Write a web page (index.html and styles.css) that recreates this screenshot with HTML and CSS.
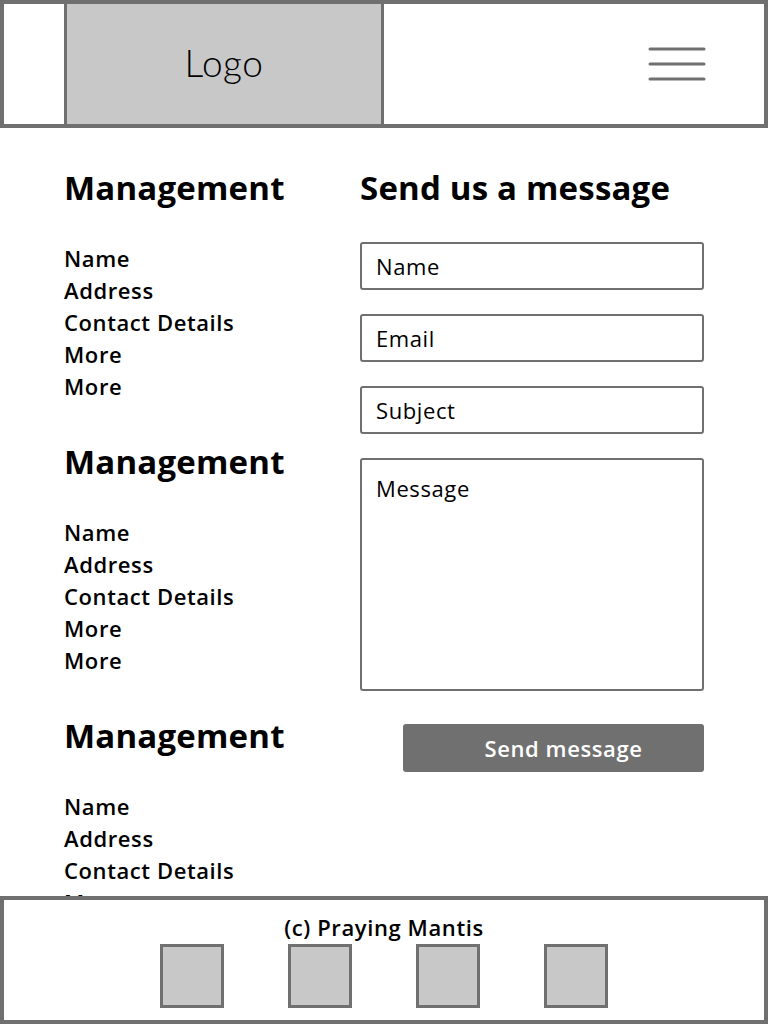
FILE: index.html
```html
<!DOCTYPE html>
<html lang="en">
<head>
<meta charset="utf-8">
<title>Contact</title>
<link rel="stylesheet" href="styles.css">
</head>
<body>
<header class="site-header">
  <div class="header-spacer"></div>
  <div class="logo">Logo</div>
  <div class="header-right">
    <button class="menu-btn" aria-label="Menu">
      <svg width="58" height="36" viewBox="0 0 58 36">
        <g stroke="#707070" stroke-width="3" stroke-linecap="round">
          <line x1="2" y1="3" x2="56" y2="3"/>
          <line x1="2" y1="18" x2="56" y2="18"/>
          <line x1="2" y1="33" x2="56" y2="33"/>
        </g>
      </svg>
    </button>
  </div>
</header>

<main class="content">
  <section class="contacts">
    <div class="group">
      <h2 class="title">Management</h2>
      <ul class="details">
        <li>Name</li>
        <li>Address</li>
        <li>Contact Details</li>
        <li>More</li>
        <li>More</li>
      </ul>
    </div>
    <div class="group">
      <h2 class="title">Management</h2>
      <ul class="details">
        <li>Name</li>
        <li>Address</li>
        <li>Contact Details</li>
        <li>More</li>
        <li>More</li>
      </ul>
    </div>
    <div class="group">
      <h2 class="title">Management</h2>
      <ul class="details">
        <li>Name</li>
        <li>Address</li>
        <li>Contact Details</li>
        <li>More</li>
        <li>More</li>
      </ul>
    </div>
  </section>

  <section class="message">
    <h2 class="title">Send us a message</h2>
    <form class="form">
      <input class="field" type="text" placeholder="Name">
      <input class="field" type="email" placeholder="Email">
      <input class="field" type="text" placeholder="Subject">
      <textarea class="field area" placeholder="Message"></textarea>
      <button class="send" type="button">Send message</button>
    </form>
  </section>
</main>

<footer class="site-footer">
  <p class="copy">(c) Praying Mantis</p>
  <div class="socials">
    <span class="social"></span>
    <span class="social"></span>
    <span class="social"></span>
    <span class="social"></span>
  </div>
</footer>
</body>
</html>
```

FILE: styles.css
```css
* { box-sizing: border-box; }

html, body {
  margin: 0;
  padding: 0;
  background: #fff;
  color: #000;
  font-family: "Open Sans", "Noto Sans", sans-serif;
}

.site-header {
  height: 128px;
  border: 4px solid #707070;
  display: flex;
}

.header-spacer { width: 60px; }

.logo {
  width: 320px;
  background: #c8c8c8;
  border-left: 3px solid #707070;
  border-right: 3px solid #707070;
  display: flex;
  align-items: center;
  justify-content: center;
  padding-bottom: 4px;
  font-family: "Lato", sans-serif;
  font-size: 37px;
  font-weight: 300;
  letter-spacing: 0.5px;
}

.header-right {
  flex: 1;
  display: flex;
  align-items: center;
  justify-content: flex-end;
  padding-right: 58px;
}

.menu-btn {
  border: 0;
  background: none;
  padding: 0;
  display: block;
  line-height: 0;
}

.content {
  display: grid;
  grid-template-columns: 296px 1fr;
  padding: 40px 64px 140px;
}

.title {
  margin: 0;
  font-size: 33px;
  line-height: 40px;
  font-weight: 700;
  letter-spacing: 0.2px;
}

.group + .group { margin-top: 40px; }

.details {
  list-style: none;
  margin: 34px 0 0;
  padding: 0;
}

.details li {
  font-size: 22px;
  line-height: 32px;
  font-weight: 600;
  letter-spacing: 0.6px;
}

.form {
  margin-top: 34px;
  display: flex;
  flex-direction: column;
  gap: 24px;
}

.field {
  display: block;
  width: 100%;
  height: 48px;
  border: 2px solid #707070;
  border-radius: 3px;
  padding: 0 14px;
  font-family: inherit;
  font-size: 22px;
  letter-spacing: 0.6px;
  color: #000;
  background: #fff;
}

.field::placeholder { color: #000; opacity: 1; }

.area {
  height: 233px;
  padding-top: 14px;
  resize: none;
  line-height: 28px;
}

.send {
  align-self: flex-end;
  width: 301px;
  height: 48px;
  margin-top: 9px;
  border: 0;
  border-radius: 3px;
  background: #707070;
  color: #fff;
  font-family: inherit;
  font-size: 22px;
  font-weight: 600;
  letter-spacing: 0.6px;
  padding: 0 0 0 20px;
}

.site-footer {
  position: fixed;
  left: 0;
  right: 0;
  bottom: 0;
  height: 128px;
  background: #fff;
  border: 4px solid #707070;
  display: flex;
  flex-direction: column;
  align-items: center;
  padding-top: 15px;
}

.copy {
  margin: 0;
  font-size: 22px;
  line-height: 24px;
  font-weight: 600;
  letter-spacing: 0.6px;
}

.socials {
  margin-top: 5px;
  display: flex;
  gap: 64px;
}

.social {
  width: 64px;
  height: 64px;
  background: #c8c8c8;
  border: 3px solid #707070;
}
```
